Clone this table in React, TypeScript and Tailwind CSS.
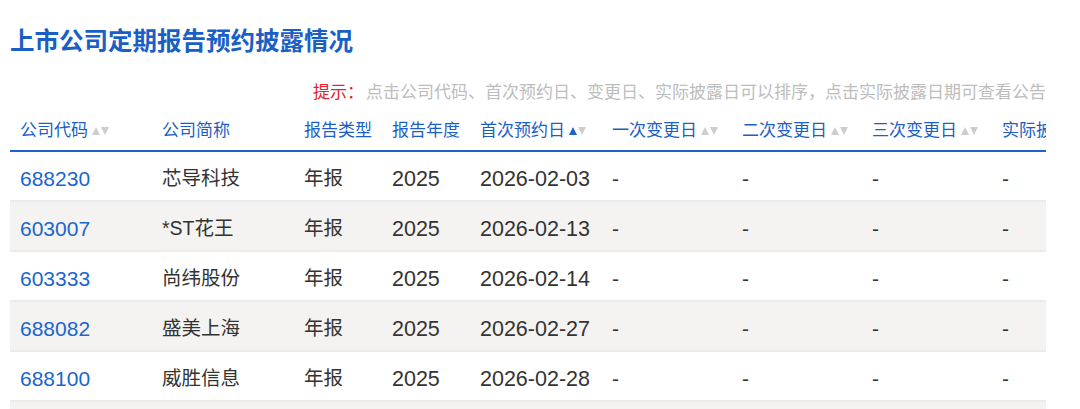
import React from "react";

const columns = [
  { label: "公司代码", width: "w-[142px]", sort: "none" },
  { label: "公司简称", width: "w-[142px]" },
  { label: "报告类型", width: "w-[88px]" },
  { label: "报告年度", width: "w-[88px]" },
  { label: "首次预约日", width: "w-[132px]", sort: "asc" },
  { label: "一次变更日", width: "w-[130px]", sort: "none" },
  { label: "二次变更日", width: "w-[130px]", sort: "none" },
  { label: "三次变更日", width: "w-[130px]", sort: "none" },
  { label: "实际披露日", width: "w-[130px]", sort: "none" },
];

const rows = [
  ["688230", "芯导科技", "年报", "2025", "2026-02-03"],
  ["603007", "*ST花王", "年报", "2025", "2026-02-13"],
  ["603333", "尚纬股份", "年报", "2025", "2026-02-14"],
  ["688082", "盛美上海", "年报", "2025", "2026-02-27"],
  ["688100", "威胜信息", "年报", "2025", "2026-02-28"],
];

function SortArrows({ active }: { active: boolean }) {
  return (
    <svg width="17" height="8" viewBox="0 0 17 8" className="ml-[4px]">
      <path d="M0 8 L4 0 L8 8 Z" fill={active ? "#1a63c9" : "#cdcdcd"} />
      <path d="M9 0 L17 0 L13 8 Z" fill="#cdcdcd" />
    </svg>
  );
}

export default function App() {
  return (
    <div className="h-[409px] w-[1080px] overflow-hidden bg-white font-['Liberation_Sans','Noto_Sans_CJK_SC',sans-serif]">
      <h1 className="pl-[10px] pt-[27px] text-[24.5px] font-bold leading-[30px] text-[#1a5fc6]">
        上市公司定期报告预约披露情况
      </h1>

      {/* hint line */}
      <div className="mt-[26px] flex w-[1046px] justify-end text-[17px] leading-[20px]">
        <span className="text-[#e3242b]">提示：</span>
        <span className="ml-[2px] text-[#bdbdbd]">
          点击公司代码、首次预约日、变更日、实际披露日可以排序，点击实际披露日期可查看公告
        </span>
      </div>

      <div className="ml-[10px] mt-[8px] w-[1036px] overflow-hidden">
        <table className="w-[1112px] table-fixed border-collapse">
          <thead>
            <tr className="border-b-2 border-[#1a63c9]">
              {columns.map((c) => (
                <th
                  key={c.label}
                  className={`${c.width} h-[40px] whitespace-nowrap pl-[10px] text-left align-middle text-[17px] font-normal text-[#1b5fc5]`}
                >
                  <span className="inline-flex items-center">
                    {c.label}
                    {c.sort && <SortArrows active={c.sort === "asc"} />}
                  </span>
                </th>
              ))}
            </tr>
          </thead>
          <tbody>
            {rows.map((r, i) => (
              <tr
                key={r[0]}
                className={`h-[50px] border-t-2 border-[#ebebeb] first:border-t-0 ${
                  i % 2 === 1 ? "bg-[#f4f3f2]" : "bg-white"
                }`}
              >
                <td className="pl-[10px] pt-[6px] text-[21px] text-[#1a66cc]">{r[0]}</td>
                <td className="pl-[10px] pt-[6px] text-[19.5px] text-[#333]">{r[1]}</td>
                <td className="pl-[10px] pt-[6px] text-[19.5px] text-[#333]">{r[2]}</td>
                <td className="pl-[10px] pt-[6px] text-[21.5px] text-[#333]">{r[3]}</td>
                <td className="pl-[10px] pt-[6px] text-[21.5px] text-[#333]">{r[4]}</td>
                {[0, 1, 2, 3].map((k) => (
                  <td key={k} className="pl-[10px] pt-[6px] text-[21px] text-[#333]">
                    -
                  </td>
                ))}
              </tr>
            ))}
            {/* next row, just starting at the bottom edge */}
            <tr className="h-[50px] border-t-2 border-[#ebebeb] bg-[#f4f3f2]">
              <td colSpan={9} />
            </tr>
          </tbody>
        </table>
      </div>
    </div>
  );
}
